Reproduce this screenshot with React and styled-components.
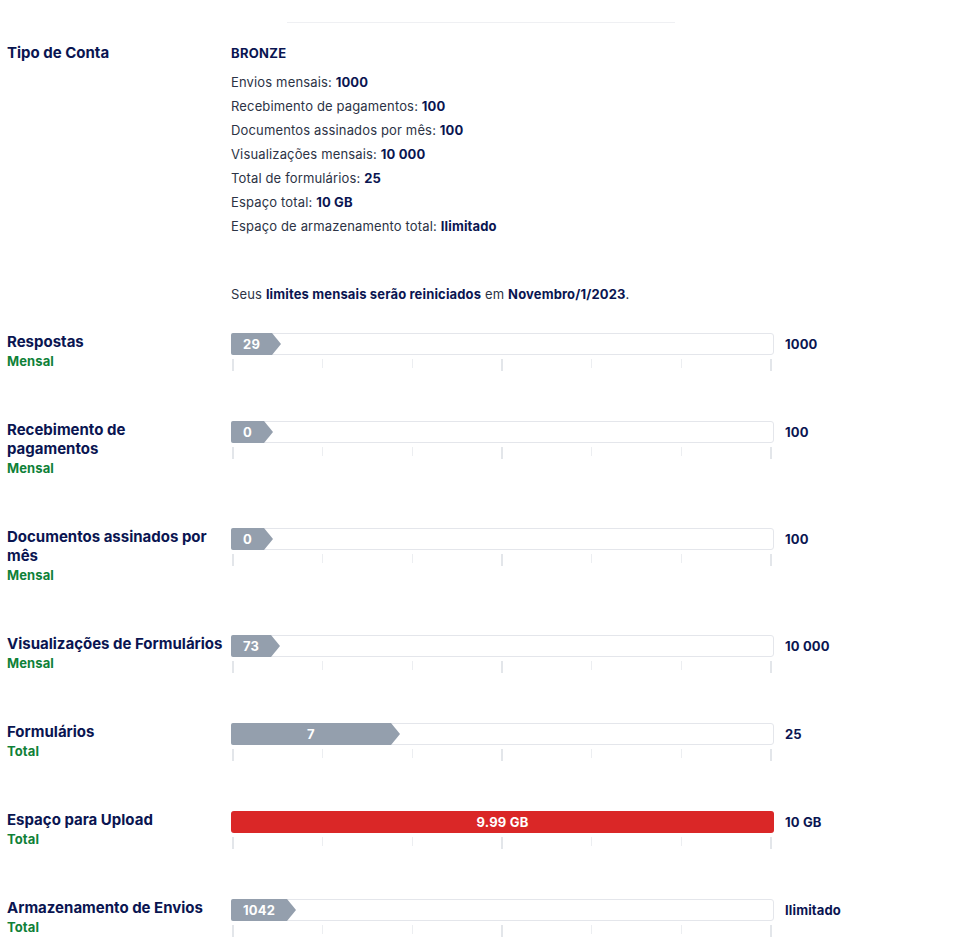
import React from "react";
import styled, { createGlobalStyle } from "styled-components";

const Global = createGlobalStyle`
  html, body { margin: 0; padding: 0; background: #fff; }
  body { font-family: "Inter", "Noto Sans", sans-serif; color: #0a1551; -webkit-font-smoothing: antialiased; }
`;

const Page = styled.div`
  width: 962px;
  padding-top: 22px;
  box-sizing: border-box;
`;

const Divider = styled.div`
  width: 388px;
  height: 1px;
  margin: 0 auto;
  background: #eff0f3;
`;

const Row = styled.div`
  display: flex;
  align-items: flex-start;
  margin-top: ${(p) => p.$mt || 0}px;
`;

const LabelCol = styled.div`
  width: 231px;
  padding-left: 7px;
  box-sizing: border-box;
  flex-shrink: 0;
`;

const Title = styled.div`
  font-size: 15px;
  font-weight: 700;
  line-height: ${(p) => p.$lh || 19}px;
  color: #0a1551;
  white-space: nowrap;
  letter-spacing: 0;
`;

const Sub = styled.div`
  font-size: 13px;
  font-weight: 700;
  line-height: 20px;
  color: #0f8138;
  letter-spacing: 0.1px;
`;

const Content = styled.div`
  display: flex;
  flex-direction: column;
`;

const Plan = styled.div`
  font-size: 13px;
  font-weight: 700;
  line-height: 20px;
  color: #0a1551;
  margin-bottom: 7px;
  letter-spacing: 0.3px;
`;

const Line = styled.div`
  font-size: 13px;
  line-height: 24px;
  color: #2c3345;
  white-space: nowrap;
  letter-spacing: 0.15px;
  b { font-weight: 700; color: #0a1551; }
`;

const Notice = styled.div`
  font-size: 13px;
  line-height: 20px;
  color: #2c3345;
  margin-top: 46px;
  letter-spacing: 0.15px;
  b { font-weight: 700; color: #0a1551; }
`;

const Track = styled.div`
  display: flex;
  flex-direction: column;
  width: 543px;
  padding-top: 1px;
`;

const Bar = styled.div`
  position: relative;
  height: 20px;
  border: 1px solid #e4e6eb;
  border-radius: 3px;
  background: #fff;
`;

const Fill = styled.div`
  position: absolute;
  top: -1px;
  left: -1px;
  height: 22px;
  display: flex;
  align-items: center;
  justify-content: center;
  padding: 0 12px;
  box-sizing: border-box;
  background: ${(p) => (p.$full ? "#da2727" : "#949fad")};
  border-radius: ${(p) => (p.$full ? "3px" : "2px 0 0 2px")};
  color: #fff;
  font-size: 13px;
  font-weight: 700;
  letter-spacing: 0.2px;
  white-space: nowrap;
  &::after {
    content: "";
    display: ${(p) => (p.$full ? "none" : "block")};
    position: absolute;
    right: -9px;
    top: 0;
    border-top: 11px solid transparent;
    border-bottom: 11px solid transparent;
    border-left: 9px solid #949fad;
  }
`;

const Ticks = styled.div`
  display: flex;
  justify-content: space-between;
  align-items: flex-start;
  padding: 4px 2px 0 1px;
`;

const Tick = styled.span`
  display: block;
  width: ${(p) => (p.$major ? 2 : 1)}px;
  height: ${(p) => (p.$major ? 12 : 9)}px;
  background: ${(p) => (p.$major ? "#e3e6ea" : "#eceef1")};
`;

const Value = styled.div`
  margin-left: 11px;
  padding-top: 1px;
  font-size: 13px;
  font-weight: 700;
  line-height: 22px;
  color: #0a1551;
  white-space: nowrap;
  letter-spacing: 0.15px;
`;

const limits = [
  ["Envios mensais:", "1000"],
  ["Recebimento de pagamentos:", "100"],
  ["Documentos assinados por mês:", "100"],
  ["Visualizações mensais:", "10 000"],
  ["Total de formulários:", "25"],
  ["Espaço total:", "10 GB"],
  ["Espaço de armazenamento total:", "Ilimitado"],
];

const usage = [
  { title: ["Respostas"], sub: "Mensal", used: "29", max: "1000", width: 0 },
  { title: ["Recebimento de", "pagamentos"], sub: "Mensal", used: "0", max: "100", width: 0 },
  { title: ["Documentos assinados por", "mês"], sub: "Mensal", used: "0", max: "100", width: 0 },
  { title: ["Visualizações de Formulários"], sub: "Mensal", used: "73", max: "10 000", width: 0 },
  { title: ["Formulários"], sub: "Total", used: "7", max: "25", width: 160 },
  { title: ["Espaço para Upload"], sub: "Total", used: "9.99 GB", max: "10 GB", full: true },
  { title: ["Armazenamento de Envios"], sub: "Total", used: "1042", max: "Ilimitado", width: 0 },
];

const tickKinds = [true, false, false, true, false, false, true];

function UsageRow({ item, first }) {
  return (
    <Row $mt={first ? 28 : 49}>
      <LabelCol>
        {item.title.map((t) => (
          <Title key={t}>{t}</Title>
        ))}
        <Sub>{item.sub}</Sub>
      </LabelCol>
      <Track>
        <Bar>
          <Fill
            $full={item.full}
            style={item.full ? { width: "calc(100% + 2px)" } : item.width ? { width: item.width } : undefined}
          >
            {item.used}
          </Fill>
        </Bar>
        <Ticks>
          {tickKinds.map((m, i) => (
            <Tick key={i} $major={m} />
          ))}
        </Ticks>
      </Track>
      <Value>{item.max}</Value>
    </Row>
  );
}

export default function App() {
  return (
    <>
      <Global />
      <Page>
        <Divider />
        <Row $mt={20}>
          <LabelCol>
            <Title $lh={20}>Tipo de Conta</Title>
          </LabelCol>
          <Content>
            <Plan>BRONZE</Plan>
            {limits.map(([k, v]) => (
              <Line key={k}>
                {k} <b>{v}</b>
              </Line>
            ))}
            <Notice>
              Seus <b>limites mensais serão reiniciados</b> em <b>Novembro/1/2023</b>.
            </Notice>
          </Content>
        </Row>
        {usage.map((item, i) => (
          <UsageRow key={i} item={item} first={i === 0} />
        ))}
      </Page>
    </>
  );
}
